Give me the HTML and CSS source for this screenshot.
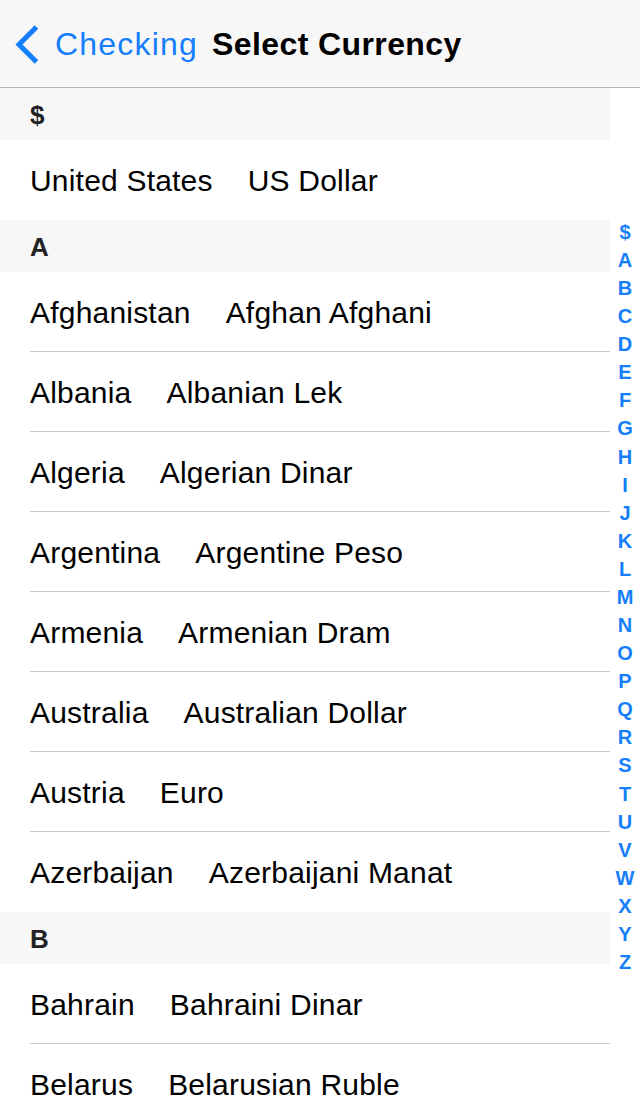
FILE: index.html
```html
<!DOCTYPE html>
<html>
<head>
<meta charset="utf-8">
<link rel="stylesheet" href="styles.css">
</head>
<body>
<header class="nav">
  <a class="back">
    <svg class="chev" width="26" height="40" viewBox="0 0 26 40"><polyline points="22.5,3 5,20.5 22.5,38" fill="none" stroke="#157efb" stroke-width="5"/></svg>
    <span class="back-label">Checking</span>
  </a>
  <h1 class="title">Select Currency</h1>
</header>
<main class="content">
  <div class="list">
    <div class="section-header">$</div>
    <div class="row"><span class="country">United States</span><span class="currency">US Dollar</span></div>
    <div class="section-header">A</div>
    <div class="row"><span class="country">Afghanistan</span><span class="currency">Afghan Afghani</span></div>
    <div class="row"><span class="country">Albania</span><span class="currency">Albanian Lek</span></div>
    <div class="row"><span class="country">Algeria</span><span class="currency">Algerian Dinar</span></div>
    <div class="row"><span class="country">Argentina</span><span class="currency">Argentine Peso</span></div>
    <div class="row"><span class="country">Armenia</span><span class="currency">Armenian Dram</span></div>
    <div class="row"><span class="country">Australia</span><span class="currency">Australian Dollar</span></div>
    <div class="row"><span class="country">Austria</span><span class="currency">Euro</span></div>
    <div class="row"><span class="country">Azerbaijan</span><span class="currency">Azerbaijani Manat</span></div>
    <div class="section-header">B</div>
    <div class="row"><span class="country">Bahrain</span><span class="currency">Bahraini Dinar</span></div>
    <div class="row"><span class="country">Belarus</span><span class="currency">Belarusian Ruble</span></div>
  </div>
  <nav class="index">
    <span>$</span><span>A</span><span>B</span><span>C</span><span>D</span><span>E</span><span>F</span><span>G</span><span>H</span><span>I</span><span>J</span><span>K</span><span>L</span><span>M</span><span>N</span><span>O</span><span>P</span><span>Q</span><span>R</span><span>S</span><span>T</span><span>U</span><span>V</span><span>W</span><span>X</span><span>Y</span><span>Z</span>
  </nav>
</main>
</body>
</html>
```
FILE: styles.css
```css
html, body {
  margin: 0;
  padding: 0;
  background: #ffffff;
  font-family: "Liberation Sans", Arial, sans-serif;
  overflow: hidden;
}
.nav {
  height: 87px;
  border-bottom: 1px solid #b2b2b2;
  background: #f7f7f7;
  display: flex;
  align-items: center;
  padding-left: 14px;
}
.back {
  display: flex;
  align-items: center;
  color: #157efb;
  margin-right: 14px;
}
.chev {
  display: block;
  margin-right: 15px;
  margin-top: 1px;
}
.back-label {
  font-size: 32px;
  letter-spacing: 1.2px;
  line-height: 40px;
}
.title {
  margin: 0;
  font-size: 32px;
  font-weight: bold;
  color: #000;
  line-height: 40px;
  letter-spacing: 0.4px;
}
.content {
  display: flex;
  height: 1008px;
  overflow: hidden;
}
.list {
  width: 610px;
  flex: none;
}
.section-header {
  height: 52px;
  box-sizing: border-box;
  padding: 2px 0 0 30px;
  line-height: 50px;
  background: #f7f7f7;
  font-size: 26px;
  font-weight: bold;
  color: #222;
}
.row {
  margin-left: 30px;
  height: 80px;
  box-sizing: border-box;
  border-bottom: 1px solid #c8c7cc;
  display: flex;
  gap: 35px;
  font-size: 30px;
  letter-spacing: 0.2px;
  padding-top: 2px;
  line-height: 77px;
  color: #000;
}
.row:has(+ .section-header), .row:last-child {
  border-bottom: none;
  line-height: 78px;
}
.index {
  width: 30px;
  display: flex;
  flex-direction: column;
  justify-content: center;
  align-items: center;
  padding-top: 10px;
  color: #157efb;
  font-size: 20px;
  font-weight: bold;
  line-height: 28.08px;
}
```
